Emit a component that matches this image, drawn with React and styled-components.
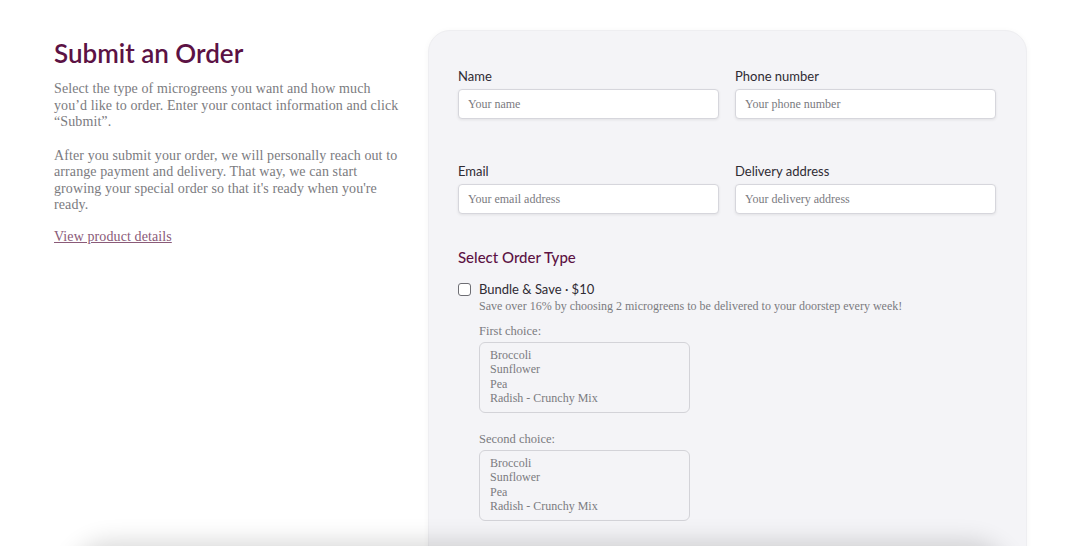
import React from 'react';
import styled, { createGlobalStyle } from 'styled-components';

const GlobalStyle = createGlobalStyle`
  html, body {
    margin: 0;
    padding: 0;
    background: #ffffff;
    overflow: hidden;
  }
  * { box-sizing: border-box; }
`;

const HEAD = '"Lato", "Open Sans", sans-serif';
const BODY = '"Liberation Serif", "DejaVu Serif", serif';

const Page = styled.div`
  display: grid;
  grid-template-columns: 346px 599px;
  column-gap: 28px;
  padding: 30px 53px 0 54px;
  height: 546px;
`;

const Intro = styled.div`
  padding-top: 7px;
`;

const Title = styled.h1`
  margin: 0 0 12px;
  font-family: ${HEAD};
  font-weight: 600;
  font-size: 26px;
  line-height: 32px;
  color: #5c1244;
`;

const Para = styled.p`
  margin: 0 0 ${(p) => (p.$tight ? 13 : 17)}px;
  font-family: ${BODY};
  font-size: 14px;
  letter-spacing: 0.1px;
  line-height: 16.5px;
  color: #7b7b80;
`;

const Link = styled.a`
  font-family: ${BODY};
  font-size: 14px;
  letter-spacing: 0.1px;
  color: #8a5a78;
  text-decoration: underline;
`;

const Card = styled.div`
  background: #f4f4f7;
  border-radius: 22px;
  border: 1px solid #eeeef1;
  box-shadow: 0 1px 6px rgba(0, 0, 0, 0.04);
  padding: 37px 30px 40px 29px;
  height: 700px;
`;

const FieldGrid = styled.div`
  display: grid;
  grid-template-columns: 1fr 1fr;
  column-gap: 16px;
  row-gap: 44px;
`;

const Field = styled.div`
  display: flex;
  flex-direction: column;
`;

const Label = styled.label`
  font-family: ${HEAD};
  font-size: 13px;
  line-height: 16px;
  color: #2f2b33;
  margin-bottom: 5px;
`;

const Input = styled.input`
  height: 30px;
  border: 1px solid #d6d6dc;
  border-radius: 4px;
  background: #fff;
  box-shadow: 0 1px 3px rgba(0, 0, 0, 0.08);
  padding: 0 9px;
  font-family: ${BODY};
  font-size: 12px;
  color: #333;
  outline: none;
  &::placeholder { color: #7a7a80; }
`;

const Section = styled.div`
  margin-top: 33px;
`;

const SectionTitle = styled.h2`
  margin: 0 0 14px;
  font-family: ${HEAD};
  font-weight: 500;
  font-size: 15px;
  line-height: 20px;
  color: #5c1244;
`;

const OptionRow = styled.div`
  display: flex;
  align-items: center;
  gap: 8px;
`;

const Check = styled.span`
  width: 13px;
  height: 13px;
  border: 1.5px solid #6e6e74;
  border-radius: 3px;
  background: #fff;
  flex: none;
`;

const OptionName = styled.span`
  font-family: ${HEAD};
  font-size: 13px;
  line-height: 16px;
  color: #2f2b33;
`;

const OptionBody = styled.div`
  padding-left: 21px;
`;

const Desc = styled.div`
  margin-top: 2px;
  font-family: ${BODY};
  font-size: 12px;
  line-height: 15px;
  color: #7b7b80;
`;

const ChoiceLabel = styled.div`
  margin-top: ${(p) => p.$gap}px;
  margin-bottom: 3px;
  font-family: ${BODY};
  font-size: 12.5px;
  line-height: 15px;
  color: #7b7b80;
`;

const ListBox = styled.div`
  width: 211px;
  height: 71px;
  border: 1px solid #d3d3d8;
  border-radius: 6px;
  padding: 5px 10px;
  display: flex;
  flex-direction: column;
`;

const ListItem = styled.div`
  font-family: ${BODY};
  font-size: 12px;
  line-height: 14.4px;
  color: #7b7b80;
`;

const BelowShadow = styled.div`
  position: fixed;
  top: 548px;
  left: 70px;
  right: 70px;
  height: 80px;
  border-radius: 40px;
  box-shadow: 0 -6px 24px rgba(0, 0, 0, 0.16);
  background: #fff;
`;

const microgreens = ['Broccoli', 'Sunflower', 'Pea', 'Radish - Crunchy Mix'];

const Choice = ({ label, gap }) => (
  <>
    <ChoiceLabel $gap={gap}>{label}</ChoiceLabel>
    <ListBox>
      {microgreens.map((m) => (
        <ListItem key={m}>{m}</ListItem>
      ))}
    </ListBox>
  </>
);

const App = () => (
  <>
    <GlobalStyle />
    <Page>
      <Intro>
        <Title>Submit an Order</Title>
        <Para>
          Select the type of microgreens you want and how much you’d like to order.
          Enter your contact information and click “Submit”.
        </Para>
        <Para $tight>
          After you submit your order, we will personally reach out to arrange payment
          and delivery. That way, we can start growing your special order so that it's
          ready when you're ready.
        </Para>
        <Link href="#">View product details</Link>
      </Intro>
      <Card>
        <FieldGrid>
          <Field>
            <Label>Name</Label>
            <Input placeholder="Your name" />
          </Field>
          <Field>
            <Label>Phone number</Label>
            <Input placeholder="Your phone number" />
          </Field>
          <Field>
            <Label>Email</Label>
            <Input placeholder="Your email address" />
          </Field>
          <Field>
            <Label>Delivery address</Label>
            <Input placeholder="Your delivery address" />
          </Field>
        </FieldGrid>
        <Section>
          <SectionTitle>Select Order Type</SectionTitle>
          <OptionRow>
            <Check />
            <OptionName>Bundle &amp; Save · $10</OptionName>
          </OptionRow>
          <OptionBody>
            <Desc>
              Save over 16% by choosing 2 microgreens to be delivered to your doorstep every week!
            </Desc>
            <Choice label="First choice:" gap={10} />
            <Choice label="Second choice:" gap={19} />
          </OptionBody>
        </Section>
      </Card>
    </Page>
    <BelowShadow />
  </>
);

export default App;
